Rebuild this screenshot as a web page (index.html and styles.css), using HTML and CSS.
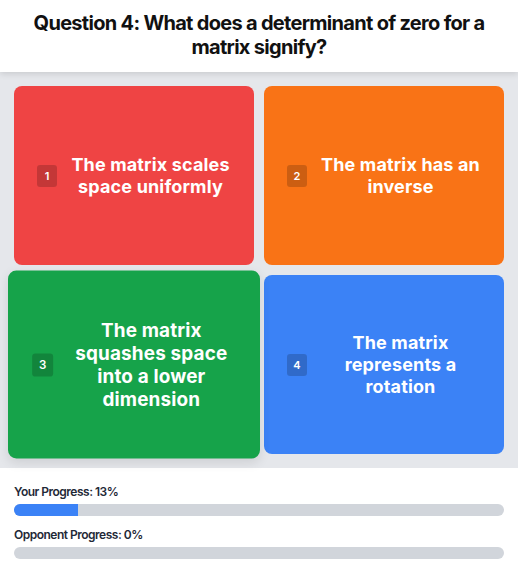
FILE: index.html
```html
<!DOCTYPE html>
<html>
<head>
    <meta charset="utf-8">
    <link rel="stylesheet" href="styles.css">
</head>
<body>
    <div class="quiz">
        <div class="question-bar">
            <h1 class="question">Question 4: What does a determinant of zero for a matrix signify?</h1>
        </div>

        <div class="choices">
            <div class="choice red">
                <span class="key">1</span>
                <span class="choice-text">The matrix scales space uniformly</span>
            </div>
            <div class="choice orange">
                <span class="key">2</span>
                <span class="choice-text">The matrix has an inverse</span>
            </div>
            <div class="choice green hovered">
                <span class="key">3</span>
                <span class="choice-text">The matrix squashes space into a lower dimension</span>
            </div>
            <div class="choice blue">
                <span class="key">4</span>
                <span class="choice-text">The matrix represents a rotation</span>
            </div>
        </div>

        <div class="progress-panel">
            <div class="progress-label">Your Progress: 13%</div>
            <div class="track">
                <div class="fill" style="width: 13%"></div>
            </div>
            <div class="progress-label second">Opponent Progress: 0%</div>
            <div class="track">
                <div class="fill" style="width: 0%"></div>
            </div>
        </div>
    </div>
</body>
</html>
```

FILE: styles.css
```css
* {
    margin: 0;
    padding: 0;
    box-sizing: border-box;
}

body {
    font-family: 'Inter', 'Liberation Sans', sans-serif;
    background: #fff;
    color: #111;
}

.quiz {
    display: flex;
    flex-direction: column;
    min-height: 573px;
}

.question-bar {
    background: #fff;
    padding: 11px 16px 13px;
    box-shadow: 0 2px 6px rgba(0, 0, 0, 0.12);
    position: relative;
    z-index: 1;
}

.question {
    font-size: 20px;
    font-weight: 700;
    line-height: 24px;
    letter-spacing: -0.7px;
    text-align: center;
    color: #111;
}

.choices {
    background: #e5e7eb;
    padding: 14px;
    display: grid;
    grid-template-columns: 1fr 1fr;
    grid-auto-rows: 179px;
    gap: 10px;
}

.choice {
    border-radius: 8px;
    display: flex;
    align-items: center;
    gap: 12px;
    padding: 0 22px 0 23px;
    color: #fff;
    cursor: pointer;
    transition: transform 0.2s ease;
}

.choice.hovered {
    transform: scale(1.05);
    box-shadow: 0 4px 10px rgba(0, 0, 0, 0.1);
}

.red { background: #ef4444; }
.orange { background: #f97316; }
.green { background: #16a34a; }
.blue { background: #3b82f6; }

.key {
    flex: none;
    width: 20px;
    height: 22px;
    border-radius: 3px;
    background: rgba(0, 0, 0, 0.18);
    font-size: 11px;
    font-weight: 600;
    display: flex;
    align-items: center;
    justify-content: center;
}

.choice-text {
    flex: 1;
    text-align: center;
    font-size: 18px;
    font-weight: 700;
    line-height: 22px;
    letter-spacing: 0.15px;
}

.progress-panel {
    background: #fff;
    padding: 16px 14px 14px;
    flex: 1;
}

.progress-label {
    font-size: 12px;
    font-weight: 600;
    line-height: 16px;
    letter-spacing: -0.5px;
    color: #1f2937;
    margin-bottom: 4px;
}

.progress-label.second {
    margin-top: 11px;
}

.track {
    height: 12px;
    background: #d1d5db;
    border-radius: 6px;
    overflow: hidden;
}

.fill {
    height: 100%;
    background: #3b82f6;
}
```
